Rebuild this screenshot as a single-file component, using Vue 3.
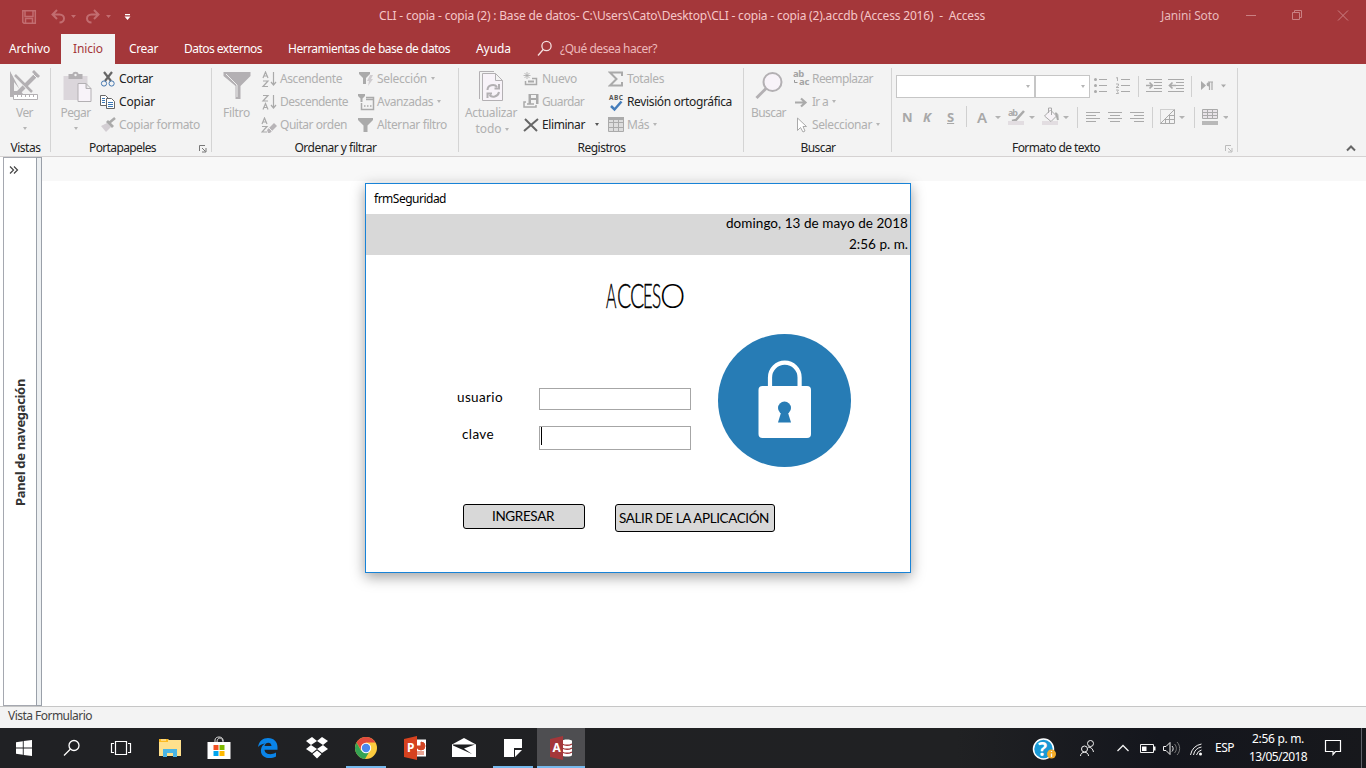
<script setup>
// Spreads a label's letters so that it takes exactly the given number of pixels.
const vFit = {
  mounted(el, { value }) {
    const box = el.getBoundingClientRect()
    const size = Math.max(box.width, box.height > 40 ? box.height : 0)
    el.style.letterSpacing = (value - size) / el.textContent.length + 'px'
  }
}
const title = 'CLI - copia - copia (2) : Base de datos- C:\\Users\\Cato\\Desktop\\CLI - copia - copia (2).accdb (Access 2016)\u00a0 -\u00a0 Access'
const word = 'ACCESO'.split('')
</script>

<template>
  <div class="screen">
    <header class="titlebar">
      <svg class="quick" width="150" height="34" viewBox="0 0 150 34">
        <g fill="none" stroke="#c26d70" stroke-width="1.5">
          <path d="M22.8 10.8h12.5v12.5H24l-1.2-1.2zM25 11v5.5h8V11M25.5 23v-4.5h7V23" />
          <path d="M53 14.5h6.5c6 0 6 8 0 8M57 10l-4.5 4.5L57 19" stroke-width="2" />
          <path d="M98 14.5h-6.500c-6 0-6 8 0 8M94 10l4.500 4.500L94 19" stroke-width="2" />
        </g>
        <path d="M71 15h5l-2.500 3zM106 15h5l-2.500 3z" fill="#c26d70" />
        <path d="M125 14h5v1.300h-5zM124.500 16.500h6l-3 3.500z" fill="#fff" />
      </svg>
      <span class="caption" v-fit="606">{{ title }}</span>
      <span class="user" v-fit="58">Janini Soto</span>
      <svg class="winctl" width="148" height="34" viewBox="1218 0 148 34" fill="none" stroke="#ca8083">
        <path d="M1246 15.500h10M1292.500 12.500h7v7h-7zM1294.500 12.500v-2h7v7h-2M1338 10.500l10 10M1348 10.500l-10 10" />
      </svg>
    </header>

    <nav class="tabs">
      <a class="t1" v-fit="41">Archivo</a>
      <a class="on"><span v-fit="30">Inicio</span></a>
      <a class="t3" v-fit="29">Crear</a>
      <a class="tab" v-fit="78">Datos externos</a>
      <a class="tab" v-fit="162">Herramientas de base de datos</a>
      <a class="tab" v-fit="35">Ayuda</a>
      <svg class="tell" width="16" height="18" viewBox="0 0 16 18" fill="none" stroke="#f5dfdf" stroke-width="1.300"><circle cx="9.500" cy="6" r="4.600" /><path d="M6.200 9.500L1 15.500" /></svg>
      <a class="ask" v-fit="97">¿Qué desea hacer?</a>
    </nav>

    <section class="ribbon">
      <div class="group vistas">
        <div class="body">
          <div class="big">
            <svg width="34" height="33" viewBox="9 69 34 33">
              <path fill="#b3b0b3" fill-rule="evenodd" d="M11 71v26h10l3-3-3-4zM15 82l7 9h-7z" />
              <path d="M19 93L38 74" stroke="#b3b0b3" stroke-width="4" /><path d="M13 73l17 18" stroke="#f3f3f3" stroke-width="1.500" /><path d="M16 75l17 17" stroke="#b3b0b3" stroke-width="2.500" /><path d="M35 70l6 6-2 2-6-6z" fill="#b3b0b3" /><path d="M33 73l5 5" stroke="#f3f3f3" />
              <path d="M14.500 94.500h24v5h-24zM18.500 95v2m4-2v2m4-2v2m4-2v2m4-2v2" fill="#fff" stroke="#b3b0b3" />
            </svg>
            <span v-fit="17">Ver</span><i class="caret"></i>
          </div>
        </div>
        <footer><span v-fit="30">Vistas</span></footer>
      </div>

      <div class="group porta">
        <div class="body">
          <div class="big">
            <svg width="34" height="33" viewBox="59.500 69 34 33">
              <path d="M64 76h24v24H64z" fill="#dbd6db" /><path d="M69 74h4c0-3 6-3 6 0h4v5H69z" fill="#b3b0b3" /><circle cx="76" cy="75" r="1.200" fill="#f3f3f3" />
              <path d="M78.500 83.500h8l5 5v13h-13zM86.500 83.500v5h5" fill="#f8f3f9" stroke="#b3b0b3" />
            </svg>
            <span v-fit="30">Pegar</span><i class="caret"></i>
          </div>
          <div class="col">
            <div class="cmd live">
              <svg width="18" height="18" viewBox="100 70 18 18" fill="none"><path d="M104 71l7 9M112 71l-7 9" stroke="#666" stroke-width="2.200" /><circle cx="104" cy="82.500" r="2.600" stroke="#4578b0" /><circle cx="111.600" cy="82.500" r="2.600" stroke="#4578b0" /></svg>
              <span v-fit="34">Cortar</span>
            </div>
            <div class="cmd live">
              <svg width="18" height="18" viewBox="100 93 18 18"><g fill="#fff" stroke="#666"><path d="M100.500 94.500h5l3 3v7h-8z" /><path d="M106.500 97.500h5l3 3v7h-8z" /></g><path d="M102 97.500h3m-3 2h3m-3 2h3M108 101.500h5m-5 2h5m-5 2h5" stroke="#3c78b5" /></svg>
              <span v-fit="36">Copiar</span>
            </div>
            <div class="cmd">
              <svg width="18" height="18" viewBox="100 116 18 18"><path d="M101 125l6-3 4 4-5 5z" fill="#d3ced3" /><path d="M106 121l2-2 6 6-2 2z" fill="#aaa" /><path d="M109 122l6-5" stroke="#aaa" stroke-width="2.500" /></svg>
              <span v-fit="81">Copiar formato</span>
            </div>
          </div>
        </div>
        <footer><span v-fit="67">Portapapeles</span><svg class="launch" width="8" height="8" viewBox="0 0 8 8" fill="none" stroke="#777"><path d="M.500 6V.500H6M3 3l3.500 3.500M7 3v4H3" /></svg></footer>
      </div>

      <div class="group orden">
        <div class="body">
          <div class="big"><svg width="34" height="33" viewBox="219.500 69 34 33"><path d="M223 72h27v4l-10 10v13h-5V86l-12-10z" fill="#b3b0b3" /><path d="M225.500 74l11 11v12" fill="none" stroke="#eee" /></svg><span v-fit="27">Filtro</span></div>
          <div class="col">
            <div class="cmd">
              <svg width="18" height="18" viewBox="0 0 18 18"><g fill="none" stroke="#aaa" stroke-width="1.200"><path d="M2 7l2.500-6L7 7M3 5h3M2 10h5l-5 5.500h5M12.500 1v13M10 11l2.500 3 2.500-3" /></g></svg>
              <span v-fit="62">Ascendente</span>
            </div>
            <div class="cmd">
              <svg width="18" height="18" viewBox="0 0 18 18"><g fill="none" stroke="#aaa" stroke-width="1.200"><path d="M2 1.500h5L2 7h5M2 15.500L4.500 9.500 7 15.500M3 13.500h3M12.500 1v13M10 11l2.500 3 2.500-3" /></g></svg>
              <span v-fit="68">Descendente</span>
            </div>
            <div class="cmd">
              <svg width="18" height="18" viewBox="0 0 18 18"><path d="M1 7L3.500 1 6 7M2 5h3M1 9.500h5L1 15h5" fill="none" stroke="#aaa" stroke-width="1.200" /><path d="M6 13l7-7 3 3-7 7H7z" fill="#b7b4b7" /><path d="M8 11l3 3" stroke="#eee" /></svg>
              <span v-fit="67">Quitar orden</span>
            </div>
          </div>
          <div class="col">
            <div class="cmd">
              <svg width="18" height="18" viewBox="0 0 18 18"><path d="M1 1h11v2L8 7v6H5V7L1 3z" fill="#aaa" /><path d="M12 4h3l-2 4h2l-5 7 1-5H9z" fill="#d0cdd0" /></svg>
              <span v-fit="50">Selección</span><i class="caret"></i>
            </div>
            <div class="cmd">
              <svg width="18" height="18" viewBox="0 0 18 18"><path d="M0 0h7v2L4.500 4.500V8h-2V4.500L0 2z" fill="#aaa" /><path d="M8 3.500h7.500v12h-12V9M8 5.500h7" fill="none" stroke="#aaa" stroke-width="1.500" /><path d="M6 12h1.500m1.500 0h1.500m1.500 0h1.500" stroke="#aaa" stroke-width="1.500" /></svg>
              <span v-fit="56">Avanzadas</span><i class="caret"></i>
            </div>
            <div class="cmd">
              <svg width="18" height="18" viewBox="0 0 18 18"><path d="M0 1h15v2L9.500 8.500V15h-4V8.500L0 3z" fill="#aaa" /></svg>
              <span v-fit="70">Alternar filtro</span>
            </div>
          </div>
        </div>
        <footer><span v-fit="82">Ordenar y filtrar</span></footer>
      </div>

      <div class="group registros">
        <div class="body">
          <div class="big">
            <svg width="34" height="33" viewBox="474 69 34 33" fill="none" stroke="#b3b0b3"><path d="M494 71.500h-14.500V99" /><path d="M482.500 73.500h13l7 7v20h-20zM495.500 73.500v7h7" fill="#f8f3f9" /><path d="M487.500 90c0-5 7-6.500 9.500-3M499 84v4.500h-4.500M499 92c-1 5-7 6-9.500 3M487.500 98v-4.500h4.500" stroke-width="2" /></svg>
            <span v-fit="52">Actualizar</span><span class="second"><span v-fit="26">todo</span><i class="caret"></i></span>
          </div>
          <div class="col">
            <div class="cmd">
              <svg width="18" height="18" viewBox="523 70 18 18" fill="none" stroke="#aaa"><path d="M527 71v7M523.500 74.500h7M524.500 72l5 5M529.500 72l-5 5" stroke-width=".8" /><path d="M532 77.500h4.500v6h-11V80" stroke-width="1.500" /><path d="M528 80.500h6" stroke-width="2" /></svg>
              <span v-fit="35">Nuevo</span>
            </div>
            <div class="cmd">
              <svg width="18" height="18" viewBox="523 93 18 18"><path d="M528.500 93h10v10h-10z" fill="#aaa" /><path d="M531 94h5v3h-5zM531 99h5v4h-5z" fill="#f3f3f3" /><path d="M526 101h-2v5h12v-2" fill="none" stroke="#aaa" stroke-width="1.500" /><path d="M527 103h7" stroke="#aaa" stroke-width="1.500" /></svg>
              <span v-fit="42">Guardar</span>
            </div>
            <div class="cmd live">
              <svg width="18" height="18" viewBox="523 116 18 18"><path d="M525 118l12 12M538 118l-14 12" stroke="#666" stroke-width="2" /></svg>
              <span v-fit="43">Eliminar</span><i class="caret far"></i>
            </div>
          </div>
          <div class="col">
            <div class="cmd">
              <svg width="18" height="18" viewBox="608 70 18 18"><path d="M622 75v-3.500h-12l6.500 6.500-6.500 6.500h12V81" fill="none" stroke="#aaa" stroke-width="2" /></svg>
              <span v-fit="37">Totales</span>
            </div>
            <div class="cmd live">
              <svg width="18" height="18" viewBox="608 92 18 18"><text x="609" y="97.500" class="abc" textLength="14">ABC</text><path d="M611 104l3.500 3.500 7-8" fill="none" stroke="#457dbb" stroke-width="2.500" /></svg>
              <span v-fit="105">Revisión ortográfica</span>
            </div>
            <div class="cmd">
              <svg width="18" height="18" viewBox="608 116 18 18"><path d="M608.500 116.500h15v14h-15zM608.500 121.500h15M608.500 126.500h15M613.500 118v13M618.500 118v13" fill="#ddd" stroke="#aaa" /><path d="M608 116h16v3h-16z" fill="#aaa" /></svg>
              <span v-fit="22">Más</span><i class="caret"></i>
            </div>
          </div>
        </div>
        <footer><span v-fit="48">Registros</span></footer>
      </div>

      <div class="group buscar">
        <div class="body">
          <div class="big"><svg width="34" height="33" viewBox="751.500 69 34 33"><circle cx="772" cy="82" r="9" fill="#f8f3f9" stroke="#b3b0b3" stroke-width="2" /><path d="M765.500 88.500L756 98" stroke="#b3b0b3" stroke-width="3" /></svg><span v-fit="35">Buscar</span></div>
          <div class="col">
            <div class="cmd">
              <span class="swap"><b v-fit="11">ab</b><b class="to" v-fit="10">ac</b><svg width="5" height="5" viewBox="0 0 5 5"><path d="M.500 0v2.500h3" fill="none" stroke="#999" /></svg></span>
              <span v-fit="61">Reemplazar</span>
            </div>
            <div class="cmd"><svg width="18" height="18" viewBox="793 93 18 18"><path d="M795 101.500h10M801 97.500l4.500 4-4.500 4" fill="none" stroke="#aaa" stroke-width="2.200" /></svg><span v-fit="16">Ir a</span><i class="caret"></i></div>
            <div class="cmd"><svg width="18" height="18" viewBox="793 116 18 18"><path d="M797.500 117v12.500l3-3 2.500 4.500 2-1-2-4.500h3.500z" fill="#fff" stroke="#aaa" /></svg><span v-fit="60">Seleccionar</span><i class="caret"></i></div>
          </div>
        </div>
        <footer><span v-fit="35">Buscar</span></footer>
      </div>

      <div class="group formato">
        <div class="fonts">
          <div class="combo name"><i class="caret"></i></div>
          <div class="combo size"><i class="caret"></i></div>
          <svg width="140" height="24" viewBox="1090 74 140 24" fill="none" stroke="#aaa">
            <g fill="#aaa" stroke="none"><circle cx="1095.500" cy="79.500" r="1.500" /><circle cx="1095.500" cy="85.500" r="1.500" /><circle cx="1095.500" cy="91.500" r="1.500" /></g>
            <path d="M1099 79.500h8m-8 6h8m-8 6h8M1121 79.500h9m-9 6h9m-9 6h9" />
            <path d="M1116 78l1.500-.500V81M1116 84h2.500v1.500l-2.500 2h3M1116 90h2.500l-1 1.500 1 2H1116" stroke-width=".9" />
            <path d="M1138.500 76v21M1191.500 76v21" stroke="#d0d0d0" />
            <path d="M1146 79.500h16m-8 3h8m-8 3h8m-8 3h8m-16 3h16M1168 79.500h16m-8 3h8m-8 3h8m-8 3h8m-16 3h16" />
            <path d="M1146 85.500h6m-2.500-3l3 3-3 3M1176 85.500h-6m2.500-3l-3 3 3 3" stroke-width="1.700" />
            <path d="M1201 81l5 4.500-5 4.500zM1208 82.500c-2 0-2 4 1 4v-4zM1221 84.500h5l-2.500 3z" fill="#aaa" stroke="none" /><path d="M1208 82h5m-3.500 0v8m2.500-8v8" stroke-width="1.200" />
          </svg>
        </div>
        <div class="styles">
          <b class="n">N</b><b class="k">K</b><b class="s">S</b><i class="rule"></i><b class="a">A</b>
          <svg width="236" height="24" viewBox="992 106 236 24" fill="none" stroke="#aaa">
            <g fill="#b3b3b3" stroke="none"><path d="M995 116h6l-3 3zM1029 116h6l-3 3zM1063 116h6l-3 3zM1179 116h6l-3 3zM1223 116h6l-3 3z" /></g>
            <text x="1008" y="116" class="hl" textLength="10">ab</text><path d="M1012 121l4-1 8-9" stroke-width="2.500" /><path d="M1008 121h16v4h-16zM1042 121h16v4h-16z" fill="#e2dde1" stroke="none" />
            <path d="M1044.500 116l6-6 6 6-5.500 5.500zM1048.500 113v-5h3v7M1055 113c4 0 3 4 2.500 6" fill="#f7f3f7" /><path d="M1056 113l2 7" stroke-width="2" />
            <path d="M1077.500 107v21M1152.500 107v21M1194.500 107v21" stroke="#d0d0d0" />
            <path d="M1086 112.500h14m-14 3h10m-10 3h14m-14 3h10M1108 112.500h14m-12 3h10m-12 3h14m-12 3h10M1130 112.500h14m-10 3h10m-14 3h14m-10 3h10" />
            <path d="M1160.500 123.500v-14h14" stroke-dasharray="1 1" /><path d="M1160.500 123.500l14-14v14zM1165.500 119v4.500M1169.500 115v8.500M1164 119.500h11M1168 115.500h7" />
            <path d="M1202.500 109.500h15v9h-15zM1202 112.500h16M1202 115.500h16M1207.500 110v8M1212.500 110v8" fill="#e9e4e9" /><path d="M1202 121h16v4h-16z" fill="#b8b8b8" stroke="none" />
          </svg>
        </div>
        <footer><span v-fit="88">Formato de texto</span><svg class="launch faint" width="8" height="8" viewBox="0 0 8 8" fill="none" stroke="#bbb"><path d="M.500 6V.500H6M3 3l3.500 3.500M7 3v4H3" /></svg></footer>
      </div>
      <svg class="collapse" width="12" height="9" viewBox="0 0 12 9"><path d="M2 6.500l4-4 4 4" fill="none" stroke="#666" stroke-width="2" /></svg>
    </section>

    <main class="work">
      <aside class="panel">
        <svg width="12" height="12" viewBox="0 0 12 12" fill="none" stroke="#444" stroke-width="1.200"><path d="M2 2.500L5.500 6 2 9.500M6 2.500L9.500 6 6 9.500" /></svg>
        <span class="side" v-fit="127">Panel de navegación</span>
      </aside>
      <div class="splitter"></div>
      <div class="canvas"><div class="docbar"></div></div>
    </main>

    <div class="status"><span v-fit="84">Vista Formulario</span></div>

    <section class="taskbar">
      <div class="apps">
        <div class="app"><svg width="16" height="16" viewBox="0 0 16 16" fill="#fff"><path d="M0 2.200L6.800 1.200v6.300H0zM7.700 1L16 0v7.500H7.700zM0 8.400h6.800v6.400L0 13.800zM7.700 8.400H16V16l-8.300-1z" /></svg></div>
        <div class="app"><svg width="18" height="18" viewBox="0 0 18 18" fill="none" stroke="#fff" stroke-width="1.300"><circle cx="11" cy="6.500" r="5" /><path d="M7.500 10L1 16.500" /></svg></div>
        <div class="app"><svg width="22" height="16" viewBox="0 0 22 16" fill="none" stroke="#fff" stroke-width="1.200"><path d="M5.500 1.500h11v13h-11zM4 3.500H1.500v9H4M18 3.500h2.500v9H18" /></svg></div>
        <div class="app"><svg width="24" height="20" viewBox="0 0 24 20"><path d="M1 1h9l1 1h12v16H1z" fill="#ffe08c" /><path d="M1 1h9v3H1z" fill="#fdba20" /><path d="M3 2h5" stroke="#fff6d8" /><path d="M5 19v-8h14v8h-4v-4H9v4z" fill="#4bb5e5" /></svg></div>
        <div class="app"><svg width="24" height="24" viewBox="0 0 24 24"><path d="M8 7V4c0-4 8-4 8 0v3M10 6c0-5 5-5 6-1" fill="none" stroke="#ddd" /><path d="M.500 6h23v17h-23z" fill="#fff" /><path d="M6.500 9h5v5h-5z" fill="#f25022" /><path d="M12.500 9h5v5h-5z" fill="#7fba00" /><path d="M6.500 15h5v5h-5z" fill="#00a4ef" /><path d="M12.500 15h5v5h-5z" fill="#ffb900" /></svg></div>
        <div class="app"><svg width="22" height="22" viewBox="0 0 22 22"><path d="M1 10C2 4 6 1 11 1c6 0 9.500 4 9.500 9v2.800H7.500c.300 5 7 5.500 11.500 2.700v4c-7 3.500-16 1-15-7 .400-3 2-5 4-6-3 .500-5.500 1.500-7 3.500zM7.500 9h7c0-4.500-6.300-4.500-7 0z" fill="#0a84e8" /></svg></div>
        <div class="app"><svg width="24" height="24" viewBox="0 0 24 24" fill="#fff"><path d="M7 1l5 4-6 4-5-4zM17 1l-5 4 6 4 5-4zM1 13l5-4 6 4-5 4zM23 13l-5-4-6 4 5 4zM12 14.500l4.500 3.500L12 22.500 7.500 18z" /></svg></div>
        <div class="app"><svg width="22" height="22" viewBox="0 0 22 22"><circle cx="11" cy="11" r="11" fill="#fccb3e" /><path d="M1.500 5.500A11 11 0 0 1 20.500 5.500H11L6 13z" fill="#e14b3e" /><path d="M1.500 5.500A11 11 0 0 0 10 22l5-8.500-9 0z" fill="#35a354" /><circle cx="11" cy="11" r="5.200" fill="#fff" /><circle cx="11" cy="11" r="4.200" fill="#4a88ee" /></svg></div>
        <div class="app"><svg width="22" height="24" viewBox="0 0 22 24"><path d="M11 3.500h11v17H11z" fill="#fff" /><path d="M17 6a4 4 0 1 1-4 4h4zM13 16h7m-7 2h7" fill="#d24625" stroke="#d24625" /><path d="M0 3l13-3v24L0 21z" fill="#d6421f" /><text x="3" y="16" class="office">P</text></svg></div>
        <div class="app"><svg width="24" height="20" viewBox="0 0 24 20"><path d="M0 6.500L12 0l12 6.500V19H0z" fill="#fff" /><path d="M1 6.500h22L12 10.500l8 5.500-19-8.500z" fill="#1c1d1f" /></svg></div>
        <div class="app"><svg width="18" height="18" viewBox="0 0 18 18"><path d="M0 0h18v9h-8v9H0z" fill="#fff" /><path d="M11 18v-7h7z" fill="#fff" /></svg></div>
        <div class="app active"><svg width="22" height="24" viewBox="0 0 22 24"><path d="M12 5c0-2 10-2 10 0v14c0 2-10 2-10 0z" fill="#fff" /><path d="M12 8c3 1.500 7 1.500 10 0m-10 4c3 1.500 7 1.500 10 0m-10 4c3 1.500 7 1.500 10 0" fill="none" stroke="#a4373a" stroke-width="1.300" /><path d="M0 3l13-3v24L0 21z" fill="#a4373a" /><text x="2.500" y="16" class="office">A</text></svg></div>
      </div>
      <div class="tray">
        <svg width="180" height="40" viewBox="1030 728 180 40" fill="none" stroke="#f2f2f2">
          <circle cx="1043.500" cy="749" r="10" fill="#1999d5" stroke="#fff" stroke-width="1.500" /><text x="1038" y="756" class="help">?</text><circle cx="1051.500" cy="754" r="4.500" fill="#f4ac27" stroke="none" /><path d="M1051.500 751v1m0 1.500v3.500" stroke-width="1.300" />
          <circle cx="1090.500" cy="743.500" r="3" /><circle cx="1084.500" cy="749" r="3" /><path d="M1080.500 756c0-5 8-5 8 0M1088 747c3 0 5 2 5.500 5" />
          <path d="M1117.500 751l5.500-5.500 5.500 5.500" stroke-width="1.300" />
          <path d="M1140.500 744.500h13v8h-13z" /><path d="M1142 746.500h4.500v4.500h-4.500zM1154 746.500h1.500v4H1154z" fill="#fff" stroke="none" />
          <path d="M1163.500 746.500h2.500l4-4v12l-4-4h-2.500zM1172 746c1.500 1.500 1.500 4 0 5.500" /><path d="M1174.500 744c2.500 2.500 2.500 6.500 0 9M1177 742c3.500 3.500 3.500 9.500 0 13" stroke="#777" />
          <path d="M1190.500 755a14 14 0 0 1 11-11M1193.500 755a10 10 0 0 1 8-8M1196.500 755a7 7 0 0 1 5-5" /><circle cx="1200.500" cy="754" r="1.500" fill="#fff" stroke="none" />
        </svg>
        <span class="lang" v-fit="19">ESP</span>
        <div class="clock"><span v-fit="52">2:56 p. m.</span><span v-fit="58">13/05/2018</span></div>
        <svg class="note" width="18" height="18" viewBox="0 0 18 18"><path d="M1.500 2.500h15v11h-5l-2.500 3v-3H1.500z" fill="none" stroke="#fff" stroke-width="1.200" /></svg>
      </div>
    </section>

    <section class="dialog">
      <div class="dtitle"><span v-fit="72">frmSeguridad</span></div>
      <div class="dband"><span v-fit="182">domingo, 13 de mayo de 2018</span><span v-fit="59">2:56 p. m.</span></div>
      <div class="form">
        <h1><span v-for="(c, i) in word" :key="i" :class="['l', 'l' + i]"><span>{{ c }}</span></span></h1>
        <div class="entry">
          <div class="fields">
            <label class="u"><span v-fit="46">usuario</span></label><div class="input"></div>
            <label class="c"><span v-fit="32">clave</span></label><div class="input tall"><i class="cursor"></i></div>
          </div>
          <svg class="lock" width="133" height="133" viewBox="0 0 133 133"><circle cx="66.500" cy="66.500" r="66.500" fill="#277cb5" /><path d="M52 56V43.500a14.800 14.800 0 0 1 29.600 0V56" fill="none" stroke="#fff" stroke-width="4.200" /><rect x="40.500" y="52" width="52.500" height="52" rx="4" fill="#fff" /><circle cx="66.500" cy="74" r="6.500" fill="#277cb5" /><path d="M63.500 77h6l3.500 11.500H60z" fill="#277cb5" /></svg>
        </div>
        <div class="actions"><button class="in"><span v-fit="62">INGRESAR</span></button><button class="out"><span v-fit="150">SALIR DE LA APLICACIÓN</span></button></div>
      </div>
    </section>
  </div>
</template>

<style>
html, body { margin: 0; overflow: hidden; }
</style>

<style scoped>
* { box-sizing: border-box; }
.screen { position: relative; width: 1366px; height: 768px; display: flex; flex-direction: column; overflow: hidden; background: #fff; font: 12px/16px "Noto Sans", "Open Sans", sans-serif; color: #222; white-space: nowrap; }
.screen svg { display: block; flex: none; }
.titlebar { height: 34px; background: #a4373a; display: flex; align-items: flex-start; color: #f5c6c8; }
.titlebar > span { margin-top: 8px; flex: none; }
.caption { margin-left: 229px; }
.user { margin-left: 176px; color: #e8babc; }
.winctl { margin-left: -1px; }
.tabs { height: 30px; background: #a4373a; display: flex; color: #fff; line-height: 30px; }
.tabs a { flex: none; }
.t1 { margin-left: 9px; }
.tabs .on { width: 54px; margin-left: 11px; padding-left: 12px; background: #f3f3f3; color: #a4373a; }
.t3 { margin-left: 14px; }
.tab { margin-left: 26px; }
.tell { margin: 6px 0 0 26px; }
.ask { margin-left: 7px; color: #edb9bb; }
.ribbon { height: 93px; background: #f3f3f3; border-bottom: 1px solid #d5d2d2; display: flex; position: relative; color: #b0b0b0; }
.group { height: 93px; position: relative; display: flex; flex-direction: column; }
.group::after { content: ""; position: absolute; right: 0; top: 4px; height: 84px; width: 1px; background: #d4d4d4; }
.vistas { width: 51px; }
.porta { width: 161px; }
.orden { width: 247px; }
.registros { width: 285px; }
.buscar { width: 148px; }
.formato { width: 346px; }
.body { height: 76px; display: grid; grid-template-columns: 49px 97px auto; }
.registros .body { grid-template-columns: 64px 85px auto; }
.big { display: flex; flex-direction: column; align-items: center; padding-top: 5px; }
.big > span { margin-top: 3px; }
.big > .caret { margin: 6px 0 0; }
.big > .second { margin-top: 0; display: flex; align-items: center; padding-left: 2px; }
.col { padding-top: 3px; }
.cmd { height: 23px; display: flex; align-items: center; gap: 1px; }
.cmd svg { position: relative; top: 1px; }
.live { color: #222; }
.swap { position: relative; width: 18px; height: 18px; display: flex; flex-direction: column; align-items: flex-start; color: #a4a4a4; }
.swap b { font-size: 9.500px; line-height: 8px; height: 8px; }
.swap .to { margin-left: 6px; }
.swap svg { position: absolute; left: 1px; top: 10px; }
.caret { flex: none; width: 0; height: 0; border: 2.500px solid transparent; border-top: 3px solid #b5b5b5; border-bottom: 0; margin-left: 3px; }
.caret.far { margin-left: 9px; border-top-color: #555; }
.group footer { height: 16px; position: relative; color: #222; display: flex; justify-content: center; }
.porta footer { padding-right: 18px; }
.formato footer { padding-right: 18px; margin-top: 12px; }
.launch { position: absolute; right: 5px; top: 5px; }
.abc { font: bold 6.500px "Noto Sans", sans-serif; fill: #555; }
.hl { font: bold 9px "Noto Sans", sans-serif; fill: #aaa; stroke: none; }
.fonts { display: flex; padding: 11px 0 0 4px; height: 35px; }
.fonts svg { margin-top: -1px; }
.combo { height: 23px; border: 1px solid #c6c6c6; background: #fff; display: flex; align-items: center; justify-content: flex-end; padding-right: 4px; }
.name { width: 139px; }
.size { width: 55px; }
.styles { display: flex; height: 29px; padding: 7px 0 0 10px; color: #a8a8a8; line-height: 22px; }
.styles b { flex: none; }
.n { width: 21px; font-size: 13px; }
.k { width: 24px; font-size: 13px; font-style: italic; }
.s { width: 19px; font-size: 13px; text-decoration: underline; }
.rule { width: 1px; height: 21px; background: #d0d0d0; }
.a { width: 25px; padding-left: 10px; font-size: 15px; font-weight: 600; }
.collapse { position: absolute; right: 9px; top: 80px; }
.work { height: 549px; display: flex; padding-left: 3px; background: #fff; }
.panel { width: 33px; height: 549px; border: 1px solid #a5a8b0; border-right: 0; display: flex; flex-direction: column; }
.panel svg { margin: 6px 0 0 4px; }
.side { writing-mode: vertical-rl; transform: rotate(180deg); font: bold 13px/18px "Noto Sans", sans-serif; color: #333; margin: 203px 0 0 7px; align-self: flex-start; }
.splitter { width: 6px; height: 549px; border: 1px solid #9aa0a9; background: #edf0f2; }
.canvas { flex: 1; }
.docbar { height: 24px; background: #f8f8f8; }
.status { height: 22px; border-top: 1px solid #c6c6c6; background: #f3f3f3; padding: 1px 8px; color: #444; }
.taskbar { height: 40px; background: linear-gradient(90deg, #202124, #202123 70%, #14161d 85%, #17181c); display: flex; justify-content: space-between; color: #fff; }
.apps { display: flex; }
.app { width: 49px; height: 40px; display: flex; align-items: center; justify-content: center; }
.app:first-child { width: 48px; }
.app:nth-child(8), .app:nth-child(11) { border-bottom: 2px solid #76b9ed; padding-top: 2px; width: 40px; margin: 0 4.500px; }
.app.active { background: #4e4e51; width: 48px; border-bottom: 2px solid #76b9ed; padding-top: 2px; }
.app:nth-child(2) { width: 48px; }
.office { font: bold 12px "Noto Sans", sans-serif; fill: #fff; }
.help { font: bold 19px "Noto Sans", sans-serif; fill: #fff; stroke: none; }
.tray { width: 336px; display: flex; align-items: flex-start; }
.lang { margin: 12px 0 0 5px; }
.clock { width: 60px; margin-left: 14px; display: flex; flex-direction: column; align-items: center; line-height: 18px; padding-top: 2px; }
.note { margin: 10px 0 0 16px; }
.tray::after { content: ""; width: 1px; height: 40px; background: #606169; margin-left: 19px; }
.dialog { position: absolute; left: 365px; top: 183px; width: 546px; height: 390px; border: 1px solid #1883d7; background: #fff; color: #000; box-shadow: 0 4px 13px rgba(0, 0, 0, .38); }
.dtitle { height: 30px; padding: 7px 0 0 8px; }
.dband { height: 41px; background: #d8d8d8; display: flex; flex-direction: column; align-items: flex-end; padding-right: 2px; font: 13.500px/21px Lato, sans-serif; }
.dband span { position: relative; top: -1px; }
.form { font-family: Lato, sans-serif; font-size: 13.500px; }
h1 { margin: 0 0 0 240px; padding-top: 22px; height: 79px; display: flex; font: 300 33px/36px Lato, sans-serif; }
.l { display: block; height: 36px; }
.l > span { display: inline-block; transform-origin: 0 50%; -webkit-text-stroke: .4px #000; }
.l0 { width: 11px; } .l0 > span { transform: scaleX(.48); }
.l1, .l2 { width: 13px; } .l1 > span, .l2 > span { transform: scaleX(.64); }
.l3 { width: 9px; } .l3 > span { transform: scaleX(.5); }
.l4 { width: 8px; } .l4 > span { transform: scaleX(.52); }
.l5 { width: 26px; } .l5 > span { transform: scaleX(.97); -webkit-text-stroke: 0; }
.entry { display: flex; height: 133px; }
.fields { width: 352px; padding: 54px 0 0 91px; display: grid; grid-template-columns: 82px 152px; grid-template-rows: 38px 24px; align-items: start; }
.fields label { line-height: 20px; margin-top: -1px; }
.fields .c { padding-left: 5px; margin-top: -2px; }
.input { height: 22px; border: 1px solid #a6a6a6; }
.tall { height: 24px; }
.cursor { display: block; width: 1px; height: 18px; background: #000; margin-left: 1px; }
.actions { display: flex; align-items: flex-start; gap: 30px; padding: 37px 0 0 97px; }
.actions button { padding: 0 2px 1px 0; border: 1px solid #000; border-radius: 3px; background: #d8d8d8; color: #000; font: 13.500px/22px Lato, sans-serif; white-space: nowrap; }
.in { width: 122px; height: 25px; }
.out { width: 160px; height: 28px; }
</style>
